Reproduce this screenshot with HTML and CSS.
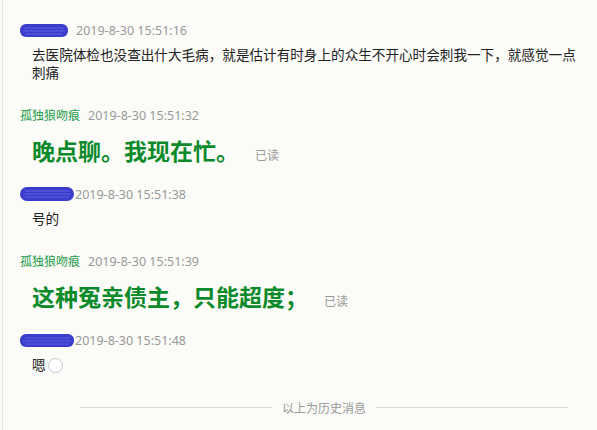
FILE: index.html
```html
<!DOCTYPE html>
<html lang="zh-CN">
<head>
  <meta charset="UTF-8" />
  <title>聊天记录</title>
  <link rel="stylesheet" href="styles.css">
</head>
<body>
  <div class="chat">
    <div class="msg">
      <div class="head">
        <svg class="scribble" width="48" height="13" viewBox="0 0 48 13">
          <rect x="0" y="0" width="48" height="13" rx="6" fill="#3a3dcc"/>
          <path d="M4 4 H44 M3 7 H45 M5 10 H42" stroke="#5d62e2" stroke-width="1"/>
        </svg>
        <span class="time">2019-8-30 15:51:16</span>
      </div>
      <div class="text">去医院体检也没查出什大毛病，就是估计有时身上的众生不开心时会刺我一下，就感觉一点刺痛</div>
    </div>

    <div class="msg mine">
      <div class="head">
        <span class="name">孤独狼吻痕</span>
        <span class="time">2019-8-30 15:51:32</span>
      </div>
      <div class="big">晚点聊。我现在忙。<span class="read">已读</span></div>
    </div>

    <div class="msg">
      <div class="head">
        <svg class="scribble" width="54" height="14" viewBox="0 0 54 14">
          <rect x="0" y="0" width="54" height="14" rx="7" fill="#3a3dcc"/>
          <path d="M5 4 H50 M3 7 H51 M5 10 H49" stroke="#5d62e2" stroke-width="1"/>
        </svg>
        <span class="time tight">2019-8-30 15:51:38</span>
      </div>
      <div class="text">号的</div>
    </div>

    <div class="msg mine">
      <div class="head">
        <span class="name">孤独狼吻痕</span>
        <span class="time">2019-8-30 15:51:39</span>
      </div>
      <div class="big">这种冤亲债主，只能超度；<span class="read">已读</span></div>
    </div>

    <div class="msg">
      <div class="head">
        <svg class="scribble" width="54" height="13" viewBox="0 0 54 13">
          <rect x="0" y="0" width="54" height="13" rx="6" fill="#3a3dcc"/>
          <path d="M5 4 H50 M3 7 H51 M5 10 H49" stroke="#5d62e2" stroke-width="1"/>
        </svg>
        <span class="time tight">2019-8-30 15:51:48</span>
      </div>
      <div class="text">嗯<span class="emoji"></span></div>
    </div>

    <div class="divider">
      <span class="line"></span>
      <span class="label">以上为历史消息</span>
      <span class="line"></span>
    </div>
  </div>
</body>
</html>
```

FILE: styles.css
```css
html, body { height: 100%; }
body {
  margin: 0;
  background: #fbfbf8;
  font-family: "Noto Sans", "Noto Sans CJK SC", sans-serif;
  color: #333;
}
.chat {
  min-height: 100%;
  box-sizing: border-box;
  margin-left: 2px;
  border-left: 1px solid #e6e6e3;
  padding: 20px 0 0 15px;
}
.msg { margin-bottom: 24px; }
.msg.mine { margin-bottom: 19px; }
.head {
  display: flex;
  align-items: center;
  height: 20px;
  font-size: 12px;
}
.scribble { display: block; margin-left: 2px; }
.name { color: #1c9a4a; margin-left: 2px; }
.time {
  color: #999;
  font-size: 12.5px;
  margin-left: 8px;
}
.time.tight { margin-left: 1px; }
.text {
  margin: 5px 0 0 14px;
  width: 550px;
  font-family: "Noto Sans CJK SC", sans-serif;
  font-size: 13.6px;
  line-height: 18px;
  color: #222;
}
.big {
  display: flex;
  align-items: baseline;
  height: 30px;
  margin: 10px 0 0 14px;
  font-family: "Noto Sans CJK SC", sans-serif;
  font-size: 23px;
  font-weight: bold;
  line-height: 30px;
  color: #0b8a2a;
}
.read {
  font-size: 12px;
  font-weight: normal;
  color: #999;
  margin-left: 16px;
}
.emoji {
  display: inline-block;
  vertical-align: -3px;
  width: 13px;
  height: 13px;
  border: 1.5px solid #c4c3d6;
  border-radius: 50%;
  margin-left: 2px;
  background: #fff;
}
.divider {
  display: flex;
  align-items: center;
  gap: 10px;
  width: 488px;
  margin: 20px 0 0 62px;
  height: 20px;
}
.line { flex: 1; height: 1px; background: #dcdcdc; }
.label {
  font-family: "Noto Sans CJK SC", sans-serif;
  font-size: 12px;
  color: #999;
}
```
